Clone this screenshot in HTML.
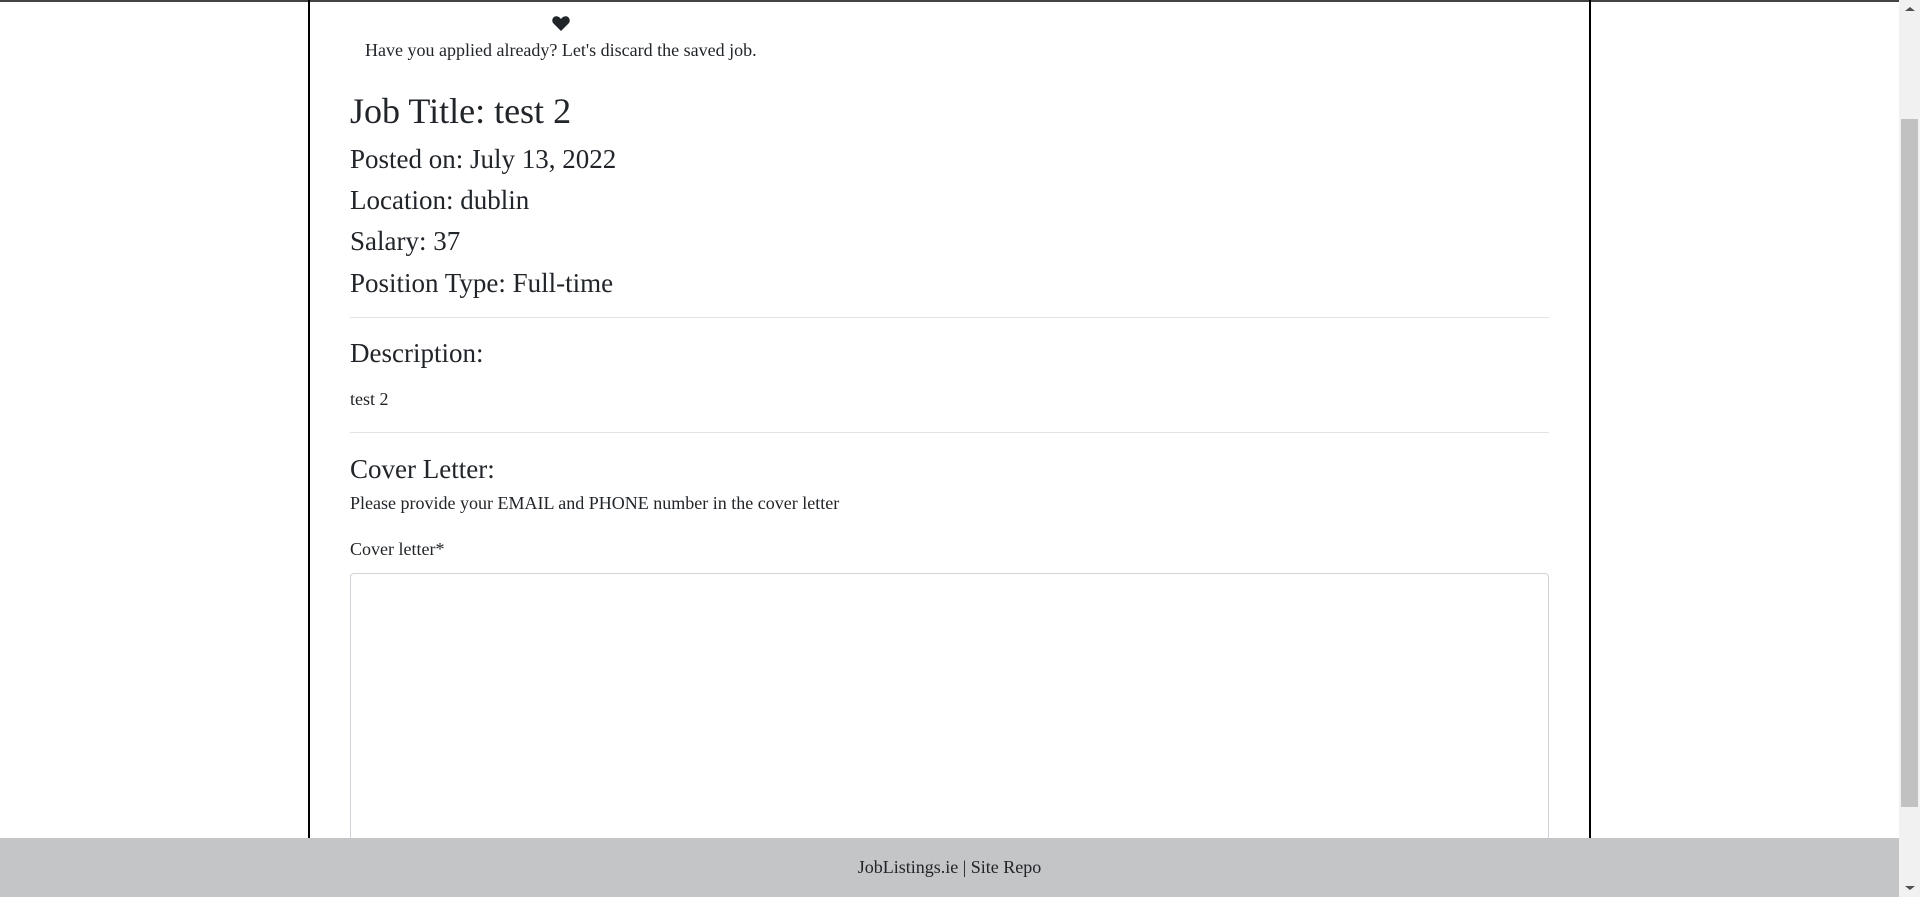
<!DOCTYPE html>
<html><head><meta charset="utf-8"><style>
html,body{margin:0;padding:0;width:1920px;height:897px;overflow:hidden;background:#fff;font-family:"Liberation Serif",serif;color:#212529}
.a{position:absolute;white-space:nowrap;line-height:1.2}
</style></head><body>
<div style="position:absolute;left:0;top:0;width:1899px;height:2px;background:#444"></div>
<div style="position:absolute;left:308px;top:0;width:2px;height:838px;background:#000"></div>
<div style="position:absolute;left:1589px;top:0;width:2px;height:838px;background:#000"></div>
<svg style="position:absolute;left:552px;top:16px" width="18" height="15" viewBox="0 0 18 15"><path d="M9 15 L1.5 7.5 C-0.5 5.5 0 1.5 3 0.5 C5.5 -0.3 7.5 1 9 3 C10.5 1 12.5 -0.3 15 0.5 C18 1.5 18.5 5.5 16.5 7.5 Z" fill="#212529"/></svg>
<div class="a" style="left:365px;top:40px;font-size:18px">Have you applied already? Let's discard the saved job.</div>
<div class="a" style="left:350px;top:90px;font-size:36px">Job Title: test 2</div>
<div class="a" style="left:350px;top:143px;font-size:27px">Posted on: July 13, 2022</div>
<div class="a" style="left:350px;top:184px;font-size:27px">Location: dublin</div>
<div class="a" style="left:350px;top:225px;font-size:27px">Salary: 37</div>
<div class="a" style="left:350px;top:267px;font-size:27px">Position Type: Full-time</div>
<div style="position:absolute;left:350px;top:317px;width:1199px;height:1px;background:#e3e3e3"></div>
<div class="a" style="left:350px;top:337px;font-size:27px">Description:</div>
<div class="a" style="left:350px;top:389px;font-size:18px">test 2</div>
<div style="position:absolute;left:350px;top:432px;width:1199px;height:1px;background:#e3e3e3"></div>
<div class="a" style="left:350px;top:453px;font-size:27px">Cover Letter:</div>
<div class="a" style="left:350px;top:493px;font-size:18px">Please provide your EMAIL and PHONE number in the cover letter</div>
<div class="a" style="left:350px;top:539px;font-size:18px">Cover letter*</div>
<div style="position:absolute;left:350px;top:573px;width:1197px;height:300px;border:1px solid #ced4da;border-radius:4px"></div>
<div style="position:absolute;left:0;top:838px;width:1899px;height:59px;background:#c4c5c7"></div>
<div class="a" style="left:0;width:1899px;text-align:center;top:857px;font-size:18px">JobListings.ie | Site Repo</div>
<div style="position:absolute;left:1899px;top:0;width:21px;height:897px;background:#f1f1f1"></div>
<div style="position:absolute;left:1901px;top:119px;width:17px;height:688px;background:#c1c1c1"></div>
<div style="position:absolute;left:1905px;top:7px;width:0;height:0;border-left:5px solid transparent;border-right:5px solid transparent;border-bottom:4px solid #505050"></div>
<div style="position:absolute;left:1905px;top:886px;width:0;height:0;border-left:5px solid transparent;border-right:5px solid transparent;border-top:4px solid #505050"></div>
</body></html>
